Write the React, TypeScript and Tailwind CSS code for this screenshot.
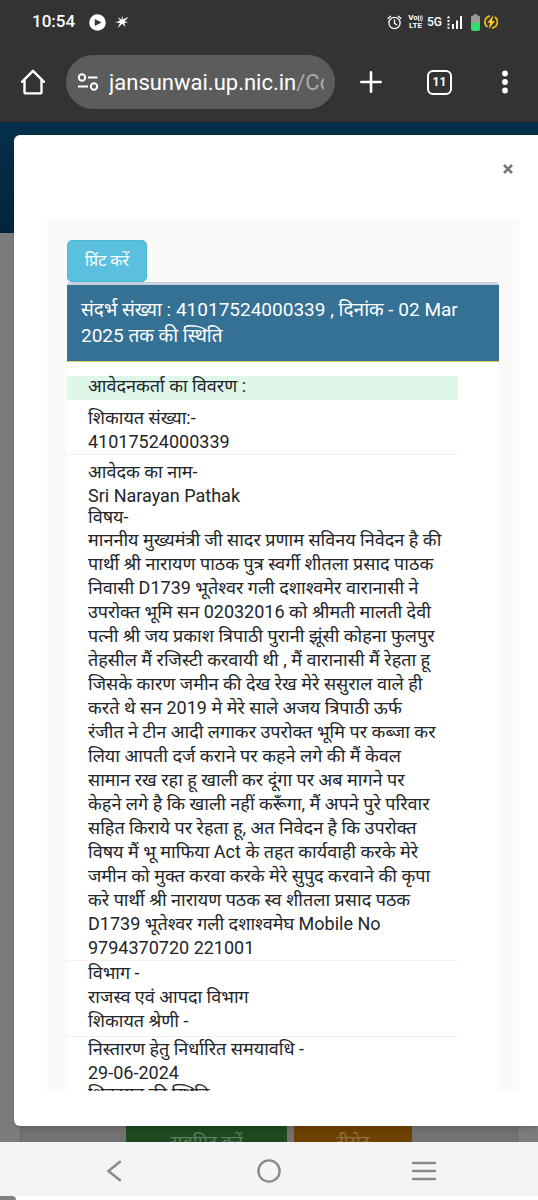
import type { ReactNode } from "react";

const subjectLines = [
  "माननीय मुख्यमंत्री जी सादर प्रणाम सविनय निवेदन है की",
  "पार्थी श्री नारायण पाठक पुत्र स्वर्गी शीतला प्रसाद पाठक",
  "निवासी D1739 भूतेश्वर गली दशाश्वमेर वारानासी ने",
  "उपरोक्त भूमि सन 02032016 को श्रीमती मालती देवी",
  "पत्नी श्री जय प्रकाश त्रिपाठी पुरानी झूंसी कोहना फुलपुर",
  "तेहसील मैं रजिस्टी करवायी थी , मैं वारानासी मैं रेहता हू",
  "जिसके कारण जमीन की देख रेख मेरे ससुराल वाले ही",
  "करते थे सन 2019 मे मेरे साले अजय त्रिपाठी ऊर्फ",
  "रंजीत ने टीन आदी लगाकर उपरोक्त भूमि पर कब्जा कर",
  "लिया आपती दर्ज कराने पर कहने लगे की मैं केवल",
  "सामान रख रहा हू खाली कर दूंगा पर अब मागने पर",
  "केहने लगे है कि खाली नहीं करूँगा, मैं अपने पुरे परिवार",
  "सहित किराये पर रेहता हू, अत निवेदन है कि उपरोक्त",
  "विषय मैं भू माफिया Act के तहत कार्यवाही करके मेरे",
  "जमीन को मुक्त करवा करके मेरे सुपुद करवाने की कृपा",
  "करे पार्थी श्री नारायण पठक स्व शीतला प्रसाद पठक",
  "D1739 भूतेश्वर गली दशाश्वमेघ Mobile No",
  "9794370720 221001",
];

function StatusBar() {
  return (
    <div className="flex h-11 items-center pl-8 pr-10 text-white">
      <span className="text-[17px] font-medium">10:54</span>
      <svg className="ml-3.5 size-[17px]" viewBox="0 0 17 17">
        <circle cx="8.5" cy="8.5" r="8.3" fill="#fff" />
        <path d="M5.8 5 12.5 8.6 5.8 12Z" fill="#333" />
      </svg>
      <svg className="ml-2 size-4" viewBox="0 0 16 16" fill="#fff">
        <path d="M8.7 5.6 14.8 2.8 10.5 7.2 14 8.2 10.4 9 11.2 13 8.3 9.8 3.6 14 6 9.1 1 8.2 6 6.8 3.8 3 7.4 5.8 8.4 1Z" />
      </svg>
      <div className="ml-auto flex items-center">
        <svg className="size-[15px]" viewBox="0 0 15 15" fill="none" stroke="#fff" strokeWidth="1.3" strokeLinecap="round">
          <circle cx="7.5" cy="8" r="5.6" />
          <path d="M7.5 5v3.3l2.2 1.5M1 3.4 3.6 1.2M14 3.4 11.4 1.2" />
        </svg>
        <div className="ml-1.5 flex w-[15px] flex-col items-center text-[8px] leading-[8px] font-bold">
          <span className="flex items-center">
            Vo
            <svg className="h-[7px] w-[5px]" viewBox="0 0 5 7" fill="none" stroke="#fff" strokeWidth="0.9">
              <path d="M.6 .5v6M2 .8q1.3 2.5 0 5M3.6.2q1.6 3 0 6.4" />
            </svg>
          </span>
          <span>LTE</span>
        </div>
        <span className="ml-1 text-[12px] font-medium">5G</span>
        <svg className="ml-1 h-[15px] w-[17px]" viewBox="0 0 17 15" fill="#fff">
          <path d="M2.5.8 4.2 3.2H.8ZM2.5 14.2.8 12.2h3.4ZM1.5 5h2v2h-2ZM1.5 8.5h2v2h-2ZM6 9h2v5H6ZM10 5.5h2V14h-2ZM14 1h2v13h-2Z" />
        </svg>
        <svg className="ml-2 h-[17px] w-[9px]" viewBox="0 0 9 17">
          <path d="M2 1.5h1V0h3v1.5h1Q9 1.5 9 3.5V9H0V3.5Q0 1.5 2 1.5Z" fill="#999" />
          <path d="M0 8.8h9V15q0 2-2 2H2q-2 0-2-2Z" fill="#2bdf70" />
        </svg>
        <svg className="ml-1 size-[14px]" viewBox="0 0 14 14">
          <path d="M6 1A6.1 6.1 0 0 0 3.5 12M8 13A6.1 6.1 0 0 0 10.8 2" fill="none" stroke="#e5b81c" strokeWidth="1.8" />
          <path d="M9.5 0 3.3 7.8H6L4.8 14 11 6H8Z" fill="#fbc91f" />
        </svg>
      </div>
    </div>
  );
}

function BrowserBar() {
  return (
    <div className="flex h-[78px] items-start pr-[22px] pl-5 text-white">
      <button aria-label="Home" className="flex h-[76px] shrink-0 items-center">
        <svg className="size-[26px]" viewBox="0 0 26 26" fill="none" stroke="#fff" strokeWidth="2.4" strokeLinejoin="round" strokeLinecap="round">
          <path d="M2 12.8 13 1.8 24 12.8M4.5 11v12q0 1.4 1.4 1.4h14.2q1.4 0 1.4-1.4V11" />
        </svg>
      </button>
      <div className="mt-[11px] ml-5 flex h-[54px] min-w-0 flex-1 items-center rounded-full bg-[#5c5c5c] px-[11px]">
        <svg className="h-[18px] w-[22px] shrink-0" viewBox="0 0 22 18" fill="none" stroke="#fff" strokeWidth="2">
          <circle cx="5" cy="4.5" r="3.2" />
          <circle cx="17" cy="13.5" r="3.2" />
          <path d="M11 4.5h9.5M1 13.5h10" />
        </svg>
        <p className="ml-2.5 min-w-0 flex-1 overflow-hidden pt-0.5 text-[22px] leading-8 whitespace-nowrap">
          jansunwai.up.nic.in<span className="text-[#aaa]">/Co</span>
        </p>
      </div>
      <button aria-label="New tab" className="ml-[25px] flex h-[76px] shrink-0 items-center">
        <svg className="size-[22px]" viewBox="0 0 22 22" stroke="#fff" strokeWidth="2.6" strokeLinecap="round">
          <path d="M11 1.3v19.4M1.3 11h19.4" />
        </svg>
      </button>
      <button className="ml-[45px] flex h-[76px] shrink-0 items-center">
        <span className="flex size-[25px] items-center justify-center rounded-md border-2 border-white text-[12px] font-bold">11</span>
      </button>
      <button aria-label="Menu" className="ml-[42px] flex h-[76px] w-[22px] shrink-0 items-center justify-center">
        <svg className="h-6 w-[6px]" viewBox="0 0 6 24" fill="#fff">
          <circle cx="3" cy="3.5" r="2.9" />
          <circle cx="3" cy="12" r="2.9" />
          <circle cx="3" cy="20.5" r="2.9" />
        </svg>
      </button>
    </div>
  );
}

function PageBehind() {
  return (
    <div className="absolute inset-0 flex flex-col bg-[#7c7c7c]">
      <div className="h-[111px] bg-linear-to-b from-[#06304a] to-[#03253b]" />
      <div className="mx-5 flex flex-1 items-end justify-center gap-[7px] border-x border-[#6a6a6a] bg-[#727272]">
        <button className="h-10 w-[161px] overflow-hidden bg-[#1d4a1f] pt-7 text-[18px] leading-6 text-[#5f7f60]">सबमिट करें</button>
        <button className="h-10 w-[118px] overflow-hidden bg-[#6e4100] pt-7 text-[18px] leading-6 text-[#8f7146]">रीसेट</button>
      </div>
    </div>
  );
}

function Row({ children }: { children: ReactNode }) {
  return <div className="border-b border-[#f1f1f1] pl-[21px] whitespace-nowrap">{children}</div>;
}

function StatusModal() {
  return (
    <div className="relative flex h-full flex-col rounded-l-md bg-white pr-[19px] pb-[35px] pl-[33px] shadow-md">
      <div className="flex h-[84px] shrink-0 items-start justify-end pt-[29px] pr-[6px]">
        <button aria-label="Close" className="flex size-[10px] items-center justify-center">
          <svg className="size-[10px]" viewBox="0 0 10 10" stroke="#777" strokeWidth="2.6">
            <path d="m1 1 8 8M9 1 1 9" />
          </svg>
        </button>
      </div>
      <div className="min-h-0 flex-1 overflow-hidden bg-[#fafafa] px-5 pt-[21px]">
        <button className="flex h-[42px] w-20 items-center justify-center rounded-[5px] border border-[#4ab8d8] bg-[#5bc0de] text-[16px] text-white">
          प्रिंट करें
        </button>
        <section className="rounded-t border-t-3 border-[#c8d0de] bg-white">
          <h1 className="h-[77px] border-b border-[#d9cf5c] bg-[#357095] px-3.5 pt-3 text-[19px] leading-[26px] whitespace-nowrap text-white">
            संदर्भ संख्या : 41017524000339 , दिनांक - 02 Mar
            <br />
            2025 तक की स्थिति
          </h1>
          <div className="mr-[41px] pt-3.5 text-[18px] leading-6 text-[#212529]">
            <h2 className="mb-1.5 bg-[#dff7e9] pb-1 pl-[21px] leading-5">आवेदनकर्ता का विवरण :</h2>
            <Row>
              <p>शिकायत संख्या:-</p>
              <p>41017524000339</p>
            </Row>
            <Row>
              <p className="pt-[5px]">आवेदक का नाम-</p>
              <p>Sri Narayan Pathak</p>
              <p className="pb-0.5 leading-[18px]">विषय-</p>
              {subjectLines.map((line) => (
                <p key={line}>{line}</p>
              ))}
            </Row>
            <Row>
              <p>विभाग -</p>
              <p>राजस्व एवं आपदा विभाग</p>
              <p className="pb-[3px]">शिकायत श्रेणी -</p>
            </Row>
            <Row>
              <p>निस्तारण हेतु निर्धारित समयावधि -</p>
              <p>29-06-2024</p>
              <p className="leading-[18px]">शिकायत की स्थिति</p>
            </Row>
          </div>
        </section>
      </div>
    </div>
  );
}

function NavBar() {
  return (
    <nav className="bg-[#f4f4f4]">
      <div className="flex h-[54px] items-center justify-between px-[102px] pt-1">
        <button aria-label="Back" className="flex w-6 justify-center">
          <svg className="h-[22px] w-4" viewBox="0 0 16 22" fill="none" stroke="#8a8a8a" strokeWidth="2.4" strokeLinecap="round">
            <path d="M14 1.8 2.4 11 14 20.2" />
          </svg>
        </button>
        <button aria-label="Home screen">
          <svg className="size-6" viewBox="0 0 24 24" fill="none" stroke="#8a8a8a" strokeWidth="2.4">
            <circle cx="12" cy="12" r="10.6" />
          </svg>
        </button>
        <button aria-label="Recent apps">
          <svg className="h-5 w-6" viewBox="0 0 24 20" stroke="#8a8a8a" strokeWidth="2.6">
            <path d="M0 2h24M0 10h24M0 18h24" />
          </svg>
        </button>
      </div>
      <div className="h-1 bg-white">
        <div className="h-1 w-4 rounded-tr bg-[#808080]" />
      </div>
    </nav>
  );
}

export default function App() {
  return (
    <div className="flex h-screen flex-col overflow-hidden font-[Roboto,'Noto_Sans',sans-serif]">
      <header className="bg-[#333]">
        <StatusBar />
        <BrowserBar />
      </header>
      <main className="relative min-h-0 flex-1 pt-[13px] pb-4 pl-3.5">
        <PageBehind />
        <StatusModal />
      </main>
      <NavBar />
    </div>
  );
}
